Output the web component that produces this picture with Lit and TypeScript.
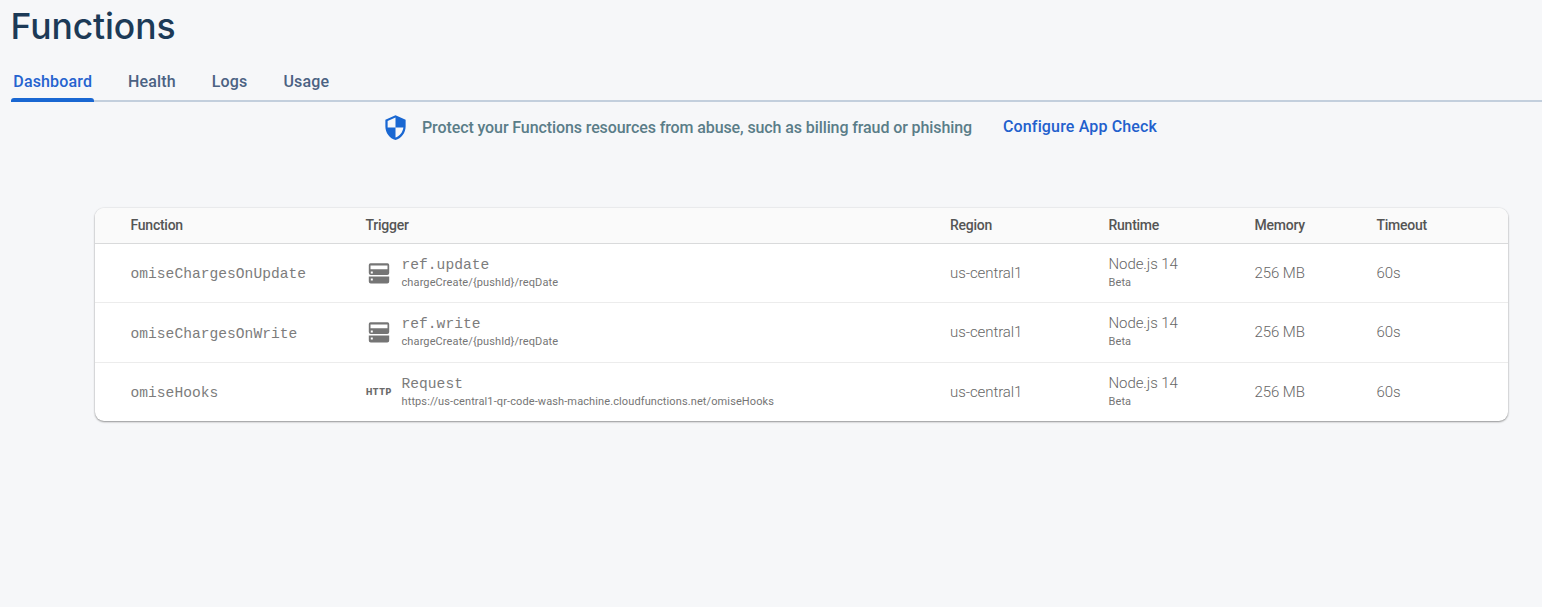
import { LitElement, html, css } from "lit";
import { customElement } from "lit/decorators.js";

interface FunctionRow {
  name: string;
  kind: "database" | "http";
  trigger: string;
  target: string;
}

const TABS = ["Dashboard", "Health", "Logs", "Usage"];
const COLUMNS = ["Function", "Trigger", "Region", "Runtime", "Memory", "Timeout"];
const ROWS: FunctionRow[] = [
  { name: "omiseChargesOnUpdate", kind: "database", trigger: "ref.update", target: "chargeCreate/{pushId}/reqDate" },
  { name: "omiseChargesOnWrite", kind: "database", trigger: "ref.write", target: "chargeCreate/{pushId}/reqDate" },
  { name: "omiseHooks", kind: "http", trigger: "Request", target: "https://us-central1-qr-code-wash-machine.cloudfunctions.net/omiseHooks" },
];

@customElement("app-root")
export class AppRoot extends LitElement {
  static styles = css`
    :host {
      display: block;
      box-sizing: border-box;
      height: 607px;
      overflow: hidden;
      background: #f6f7f9;
      font-family: Roboto, sans-serif;
    }
    .title {
      box-sizing: border-box;
      margin: 0;
      padding: 4px 0 0 10.5px;
      height: 62px;
      font: 450 35.5px/46px Inter, sans-serif;
      letter-spacing: -0.1px;
      color: #1c3a57;
    }
    .tabs {
      display: flex;
      gap: 32px;
      box-sizing: border-box;
      height: 40px;
      margin-left: 11px;
      border-bottom: 2px solid #c3cfdd;
    }
    .tab {
      display: flex;
      flex-direction: column;
      justify-content: space-between;
      box-sizing: border-box;
      height: 40px;
      font-size: 16px;
      font-weight: 500;
      line-height: 39px;
      letter-spacing: 0.15px;
      color: #4b6283;
      text-decoration: none;
    }
    .label {
      height: 36px;
      padding: 0 1.7px 0 2.3px;
    }
    .tab.active {
      color: #2563cf;
    }
    .tab.active::after {
      content: "";
      height: 4px;
      background: #1967d2;
      border-radius: 3px 3px 0 0;
    }
    .notice {
      display: flex;
      align-items: center;
      height: 50px;
      padding-left: 382px;
      font-size: 16px;
      font-weight: 500;
      color: #5a7d88;
    }
    .shield {
      width: 27px;
      height: 27px;
      margin-right: 13px;
    }
    .message {
      letter-spacing: -0.1px;
    }
    .configure {
      margin: 0 0 2px 31px;
      letter-spacing: 0.15px;
      color: #2260cd;
      text-decoration: none;
    }
    .card {
      margin: 56px 34px 0 95px;
      height: 213px;
      border-radius: 9px;
      overflow: hidden;
      background: #fff;
      box-shadow: 0 1px 2px rgba(0, 0, 0, 0.38), 0 0 2px rgba(0, 0, 0, 0.12);
    }
    .row {
      display: grid;
      grid-template-columns: 235px 584.5px 158.5px 146px 122px 1fr;
      align-items: center;
      box-sizing: border-box;
      padding-left: 35.5px;
      height: 59px;
      border-bottom: 1px solid #ececec;
      font-size: 15px;
      font-weight: 300;
      letter-spacing: -0.08px;
      color: #666;
    }
    .row.tall {
      height: 60px;
      padding-bottom: 1px;
    }
    .row:last-child {
      border-bottom: 0;
      padding-bottom: 2px;
    }
    .row.head {
      height: 36px;
      padding-bottom: 1px;
      background: #fafafa;
      border-color: #d9dadb;
      font-size: 14px;
      font-weight: 500;
      letter-spacing: -0.25px;
      color: #555;
    }
    .mono {
      font-family: "Liberation Mono", monospace;
      font-size: 14.6px;
      letter-spacing: 0.02px;
      color: #7c7c7c;
    }
    .name {
      padding-top: 1px;
    }
    .row:not(:nth-child(2)) .name {
      padding-top: 3px;
    }
    .trigger {
      display: flex;
      align-items: center;
    }
    .icon {
      width: 26px;
      height: 24px;
      margin-right: 10px;
      flex: none;
    }
    .http {
      font: 900 9px/26px Roboto, sans-serif;
      height: 25px;
      text-indent: 0.5px;
      letter-spacing: 0.65px;
      color: #6b6b6b;
    }
    .stack {
      display: flex;
      flex-direction: column;
    }
    .main {
      line-height: 19px;
    }
    .main.mono {
      line-height: 21px;
      margin-bottom: -2px;
    }
    .sub {
      font-size: 11px;
      font-weight: 400;
      letter-spacing: 0.11px;
      line-height: 17px;
      color: #757575;
    }
  `;

  private icon(kind: FunctionRow["kind"]) {
    if (kind === "http") return html`<span class="icon http">HTTP</span>`;
    return html`<svg class="icon" viewBox="0 0 26 24" aria-hidden="true">
      <path fill="#757575" fill-rule="evenodd" d="M4.500 2.300h17a1.700 1.700 0 0 1 1.700 1.700v8a2 2 0 0 1-2 2H4.800a2 2 0 0 1-2-2V4a1.700 1.700 0 0 1 1.700-1.700zM4.500 4.500v3.700h17V4.500zM4.800 10.500v2h2v-2z" />
      <path fill="#757575" fill-rule="evenodd" d="M2.800 15.500h20.400v5a2 2 0 0 1-2 2H4.800a2 2 0 0 1-2-2zM4.800 17.500v2h2v-2z" />
    </svg>`;
  }

  render() {
    return html`
      <h1 class="title">Functions</h1>
      <nav class="tabs">
        ${TABS.map((t, i) => html`<a class="tab ${i === 0 ? "active" : ""}"><span class="label">${t}</span></a>`)}
      </nav>
      <div class="notice">
        <svg class="shield" viewBox="0 0 24 24" aria-hidden="true">
          <path fill="#1967d2" d="M12 1 3 5v6c0 5.550 3.840 10.740 9 12 5.160-1.260 9-6.450 9-12V5l-9-4zm0 10.990h7c-.53 4.120-3.280 7.790-7 8.940V12H5V6.300l7-3.110v8.800z" />
        </svg>
        <span class="message">Protect your Functions resources from abuse, such as billing fraud or phishing</span>
        <a class="configure">Configure App Check</a>
      </div>
      <section class="card">
        <div class="row head">${COLUMNS.map((c) => html`<span>${c}</span>`)}</div>
        ${ROWS.map(
          (r, i) => html`<div class="row ${i === 1 ? "tall" : ""}">
            <span class="mono name">${r.name}</span>
            <div class="trigger">
              ${this.icon(r.kind)}
              <div class="stack">
                <span class="main mono">${r.trigger}</span>
                <span class="sub">${r.target}</span>
              </div>
            </div>
            <span>us-central1</span>
            <div class="stack"><span class="main">Node.js 14</span><span class="sub">Beta</span></div>
            <span>256 MB</span>
            <span>60s</span>
          </div>`
        )}
      </section>
    `;
  }
}
